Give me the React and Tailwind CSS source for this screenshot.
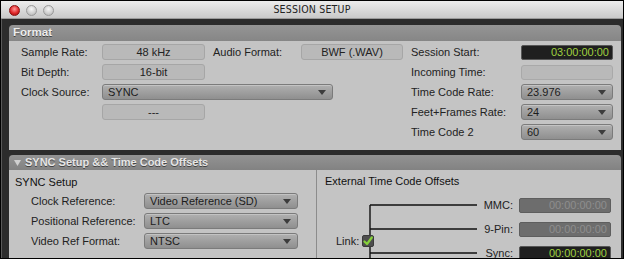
import React from "react";

const font = { fontFamily: '"Liberation Sans", Arial, sans-serif' };

const Arrow = () => (
  <svg width="8" height="5" viewBox="0 0 8 5" className="shrink-0">
    <path d="M0 0 H8 L4 5 Z" fill="#3c3c3c" />
  </svg>
);

const Select = ({ value, w }) => (
  <div
    className={`${w} h-[16px] flex items-center justify-between pl-[5px] pr-[6px] rounded-[3px] border border-[#7b7b7b] bg-gradient-to-b from-[#b0b0b0] to-[#8f8f8f] shadow-[inset_0_1px_0_rgba(255,255,255,0.25)] text-[11px] text-[#1c1c1c] leading-none`}
  >
    <span>{value}</span>
    <Arrow />
  </div>
);

const Box = ({ value, w = "w-[103px]" }) => (
  <div
    className={`${w} h-[16px] flex items-center justify-center rounded-[3px] border border-[#a6a6a6] bg-[#b9b9b9] text-[11px] text-[#222] leading-none`}
  >
    {value}
  </div>
);

const TimeBox = ({ value, dim }) => (
  <div
    className={`w-[92px] h-[15px] shrink-0 flex items-center justify-end pr-[3px] rounded-[2px] text-[11px] leading-none ${
      dim
        ? "bg-[#6d6d6d] border border-[#5e5e5e] text-[#8e8e8e]"
        : "bg-[#1f1f1f] border border-[#575757] text-[#9fd140]"
    }`}
  >
    {value}
  </div>
);

const Label = ({ children, w }) => (
  <span className={`${w} shrink-0 text-[11px] text-[#222] leading-none`}>{children}</span>
);

const Light = ({ red }) => (
  <div
    className={`w-[11px] h-[11px] rounded-full border ${
      red
        ? "border-[#8a1010] bg-[radial-gradient(circle_at_50%_35%,#ff9a9a,#e0282a_55%,#9a0d0d)]"
        : "border-[#9a9a9a] bg-[radial-gradient(circle_at_50%_35%,#f6f6f6,#cdcdcd_60%,#b0b0b0)]"
    }`}
  />
);

export default function App() {
  return (
    <div className="w-[627px] h-[261px] bg-white" style={font}>
      <div className="w-[624px] h-[259px] border border-black flex flex-col overflow-hidden">
        {/* title bar */}
        <div className="h-[18px] shrink-0 relative flex items-center justify-center bg-gradient-to-b from-[#ececec] to-[#c9c9c9] border-b border-[#9a9a9a]">
          <div className="absolute left-[8px] top-[4px] flex gap-[6px]">
            <Light red />
            <Light />
            <Light />
          </div>
          <span className="text-[10.5px] tracking-[0.2px] text-[#222]" style={{ fontFamily: '"DejaVu Sans Condensed","Liberation Sans",sans-serif' }}>
            SESSION SETUP
          </span>
        </div>

        {/* body */}
        <div className="flex-1 min-h-0 bg-[#2c2c2c] pl-[7px] pt-[6px] flex flex-col border-l border-[#5a5a5a]">
          {/* Format panel */}
          <div className="w-[612px] shrink-0 rounded-t-[4px] overflow-hidden">
            <div className="h-[16px] bg-gradient-to-b from-[#959595] to-[#868686] pl-[4px] flex items-center">
              <span className="text-[11.5px] font-bold text-[#ececec] [text-shadow:0_1px_0_#444]">Format</span>
            </div>
            <div className="h-[109px] bg-[#c4c4c4] pl-[12px] pr-[8px] pt-[1px] flex">
              <div className="w-[390px] flex flex-col">
                <div className="h-[20px] flex items-center">
                  <Label w="w-[81px]">Sample Rate:</Label>
                  <Box value="48 kHz" />
                  <span className="w-[96px] pl-[8px] text-[11px] text-[#222]">Audio Format:</span>
                  <Box value="BWF (.WAV)" w="w-[102px]" />
                </div>
                <div className="h-[20px] flex items-center">
                  <Label w="w-[81px]">Bit Depth:</Label>
                  <Box value="16-bit" />
                </div>
                <div className="h-[20px] flex items-center">
                  <Label w="w-[81px]">Clock Source:</Label>
                  <Select value="SYNC" w="w-[231px]" />
                </div>
                <div className="h-[20px] flex items-center">
                  <Label w="w-[81px]" />
                  <Box value="---" />
                </div>
              </div>
              <div className="flex-1 flex flex-col">
                <div className="h-[20px] flex items-center justify-between">
                  <Label>Session Start:</Label>
                  <TimeBox value="03:00:00:00" />
                </div>
                <div className="h-[20px] flex items-center justify-between">
                  <Label>Incoming Time:</Label>
                  <div className="w-[92px] h-[15px] rounded-[3px] border border-[#a9a9a9] bg-[#b9b9b9]" />
                </div>
                <div className="h-[20px] flex items-center justify-between">
                  <Label>Time Code Rate:</Label>
                  <Select value="23.976" w="w-[92px]" />
                </div>
                <div className="h-[20px] flex items-center justify-between">
                  <Label>Feet+Frames Rate:</Label>
                  <Select value="24" w="w-[92px]" />
                </div>
                <div className="h-[20px] flex items-center justify-between">
                  <Label>Time Code 2</Label>
                  <Select value="60" w="w-[92px]" />
                </div>
              </div>
            </div>
          </div>

          {/* SYNC panel */}
          <div className="mt-[5px] w-[612px] flex-1 min-h-0 flex flex-col rounded-t-[4px] overflow-hidden">
            <div className="h-[15px] shrink-0 bg-gradient-to-b from-[#939393] to-[#828282] pl-[5px] flex items-center gap-[4px]">
              <svg width="7" height="6" viewBox="0 0 7 6">
                <path d="M0 0 H7 L3.5 6 Z" fill="#d0d0d0" />
              </svg>
              <span className="text-[11px] font-bold text-[#e6e6e6] [text-shadow:0_1px_0_#444]">
                SYNC Setup &amp;&amp; Time Code Offsets
              </span>
            </div>
            <div className="flex-1 min-h-0 bg-[#c4c4c4] flex overflow-hidden">
              <div className="w-[308px] border-r border-[#8c8c8c] pt-[5px]">
                <div className="pl-[6px] h-[14px] text-[11px] text-[#111] leading-[14px]">SYNC Setup</div>
                <div className="mt-[2px] pl-[22px] flex flex-col">
                  <div className="h-[20px] flex items-center">
                    <Label w="w-[113px]">Clock Reference:</Label>
                    <Select value="Video Reference (SD)" w="w-[154px]" />
                  </div>
                  <div className="h-[20px] flex items-center">
                    <Label w="w-[113px]">Positional Reference:</Label>
                    <Select value="LTC" w="w-[154px]" />
                  </div>
                  <div className="h-[20px] flex items-center">
                    <Label w="w-[113px]">Video Ref Format:</Label>
                    <Select value="NTSC" w="w-[154px]" />
                  </div>
                </div>
              </div>
              <div className="flex-1 relative pt-[4px]">
                <svg className="absolute left-0 top-0" width="170" height="100">
                  <path d="M53 35 V100 M53 35 H160 M53 59 H160 M53 83 H160" stroke="#111" strokeWidth="1.4" fill="none" />
                </svg>
                <div className="pl-[8px] h-[14px] text-[11px] text-[#111] leading-[14px]">External Time Code Offsets</div>
                <div className="absolute left-[19px] top-[65px] flex items-center gap-[3px]">
                  <span className="text-[11px] text-[#222] leading-none">Link:</span>
                  <div className="w-[12px] h-[12px] rounded-[2px] bg-[#4e4e4e] border border-[#3a3a3a] flex items-center justify-center">
                    <svg width="10" height="10" viewBox="0 0 10 10">
                      <path d="M1.5 5.5 L4 8 L8.8 1.5" stroke="#86d13a" strokeWidth="2.2" fill="none" strokeLinecap="round" strokeLinejoin="round" />
                    </svg>
                  </div>
                </div>
                <div className="mt-[5px] pr-[10px] flex flex-col">
                  <div className="h-[24px] shrink-0 flex items-center justify-end gap-[6px]">
                    <Label>MMC:</Label>
                    <TimeBox value="00:00:00:00" dim />
                  </div>
                  <div className="h-[24px] shrink-0 flex items-center justify-end gap-[6px]">
                    <Label>9-Pin:</Label>
                    <TimeBox value="00:00:00:00" dim />
                  </div>
                  <div className="h-[24px] shrink-0 flex items-center justify-end gap-[6px]">
                    <Label>Sync:</Label>
                    <TimeBox value="00:00:00:00" />
                  </div>
                </div>
              </div>
            </div>
          </div>
        </div>
      </div>
    </div>
  );
}
